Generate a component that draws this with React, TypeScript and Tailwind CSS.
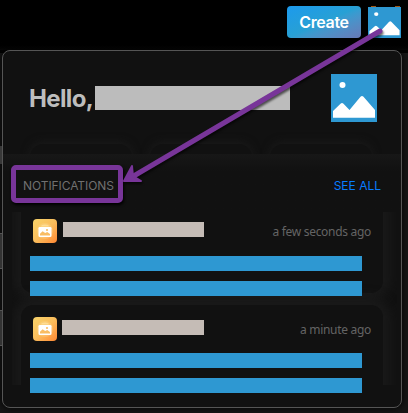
import React from "react";

function Mountains({ className }: { className: string }) {
  return (
    <svg className={className} viewBox="0 0 46 48" preserveAspectRatio="none" aria-hidden="true">
      <rect width="46" height="48" fill="#2e98d2" />
      <circle cx="11.5" cy="11" r="3" fill="#fff" />
      <path d="M2 43.7V37L9.5 29.7Q11 28.3 12.5 29.7L18.5 36L29.5 22.7Q31 21.2 32.5 22.7L44 36V43.7Z" fill="#fff" />
    </svg>
  );
}

function PhotoBadge() {
  return (
    <div className="h-6 w-6 shrink-0 rounded-[4px] bg-linear-to-br from-[#f7d36a] via-[#fabd5c] to-[#ff8732]">
      <svg viewBox="0 0 24 24" className="block h-6 w-6" aria-hidden="true">
        <circle cx="12" cy="12" r="8" fill="#ffe2a8" opacity=".25" />
        <path d="M8 7.5Q8 5.5 12 5.5T16 7.5Z" fill="#ffe19b" opacity=".8" />
        <rect x="5.5" y="8" width="13" height="10" rx="1.3" fill="#fff" />
        <path d="M7 16.5V14.8L9.6 12.2L12.2 14L14.2 13L17 15V16.5Z" fill="#f9bd63" />
        <circle cx="14" cy="11" r="1.1" fill="#f9bd63" />
      </svg>
    </div>
  );
}

function Notice({ time, second = false }: { time: string; second?: boolean }) {
  return (
    <article className={second ? "h-[80px] pt-3" : "h-[81px] pt-[7px]"}>
      <div className="flex h-6 items-center pr-3 pl-3">
        <PhotoBadge />
        <div className={second ? "-mt-[3px] ml-[5px] h-[15px] w-[142px] bg-[#c5bcb6]" : "-mt-[3px] ml-[6px] h-[15px] w-[141px] bg-[#c5bcb6]"} />
        <time className="mt-[2px] ml-auto font-['Noto_Sans','Open_Sans',sans-serif] text-[12px] leading-4 tracking-[-0.3px] whitespace-nowrap text-[#646464]">{time}</time>
      </div>
      <div className={second ? "mt-3 ml-[9px] h-[15px] w-[332px] bg-[#2e98d2]" : "mt-[13px] ml-[9px] h-[15px] w-[332px] bg-[#2e98d2]"} />
      <div className="mt-[10px] ml-[9px] h-[15px] w-[332px] bg-[#2e98d2]" />
    </article>
  );
}

export default function App() {
  return (
    <div className="relative h-[413px] w-[408px] overflow-hidden bg-[linear-gradient(#000_0_53px,#161616_53px)] font-['Inter',sans-serif]">
      <header className="flex h-[50px] justify-end bg-linear-to-b from-black from-80% to-[#080808] pt-[6px] pr-[7px]">
        <button className="h-8 w-[74px] rounded-[4px] bg-linear-to-br from-[#1c9aed] via-[#28a0d4] to-[#6679b6] text-[16px] leading-8 font-semibold tracking-[-0.35px] text-white">Create</button>
        <div className="relative mt-px ml-[7px] h-[31px] w-[33px]">
          <Mountains className="block h-[31px] w-[33px]" />
          <span className="absolute -top-px left-[3px] h-px w-[5px] bg-[#a35714]" />
          <span className="absolute -top-px right-[1px] h-px w-[5px] bg-[#a35714]" />
        </div>
      </header>

      <main className="relative ml-[2px] h-[358px] w-[400px] rounded-[8px] border border-[#555] bg-[#111] shadow-[0_0_7px_#000]">
        <section className="relative flex h-[103px] overflow-hidden pt-[23px] pl-[26px]">
          <h1 className="mt-[9px] w-[66px] text-[24px] leading-8 font-bold tracking-[-0.65px] whitespace-nowrap text-[#bdbdbd]">Hello,</h1>
          <div className="mt-3 h-6 w-[195px] bg-[#bcbcbc]" />
          <Mountains className="ml-[41px] block h-12 w-[46px]" />
          <div className="absolute top-[93px] left-[27px] flex h-4 gap-[18px]">
            <i className="h-9 w-[102px] rounded-[13px] bg-[#111] shadow-[0_-2px_9px_#1a1a1a]" />
            <i className="h-9 w-[102px] rounded-[13px] bg-[#111] shadow-[0_-2px_9px_#1a1a1a]" />
            <i className="h-9 w-[102px] rounded-[13px] bg-[#111] shadow-[0_-2px_9px_#1a1a1a]" />
          </div>
        </section>
        <section className="flex h-[58px] justify-between bg-linear-to-b from-[#171717] to-[#111] to-30% pt-[11px] pr-[20px] pl-2">
          <div className="h-[38px] w-[112px] rounded-[5px] border-[5px] border-[#783599] pl-[7px] text-[12px] leading-[31px] tracking-[-0.07px] whitespace-nowrap text-[#707070] shadow-[1px_2px_3px_#000]">NOTIFICATIONS</div>
          <a className="mt-[12px] text-[12px] leading-[18px] whitespace-nowrap text-[#087cff]">SEE ALL</a>
        </section>
        <section className="relative h-[173px] px-[18px]">
          <div className="absolute inset-y-0 right-1 left-[9px] overflow-hidden">
            <div className="-mt-4 ml-[9px] h-[97px] w-[362px] rounded-[12px] bg-[#111] shadow-[0_0_12px_7px_#1a1a1a]" />
            <div className="mt-3 ml-[9px] h-[97px] w-[362px] rounded-[12px] bg-[#111] shadow-[0_0_12px_7px_#1a1a1a]" />
          </div>
          <div className="relative flex flex-col gap-3">
            <Notice time="a few seconds ago" />
            <Notice time="a minute ago" second />
          </div>
        </section>
      </main>

      <div className="absolute top-[146px] left-0 h-[18px] w-[2px] bg-[#383838]" />
      <div className="absolute top-[233px] left-0 h-[36px] w-[2px] border-y border-[#555] bg-[#333]" />
      <div className="absolute top-[310px] left-0 h-[36px] w-[2px] border-y border-[#555] bg-[#333]" />
      <svg className="pointer-events-none absolute inset-0 h-[413px] w-[408px] drop-shadow-[1px_2px_1px_#0009]" viewBox="0 0 408 413" aria-hidden="true">
        <path d="M380 31L132 177" stroke="#783599" strokeWidth="5" strokeLinecap="round" />
        <path d="M132 166L124 181L141 181L133 176Z" fill="#783599" stroke="#783599" strokeWidth="2" strokeLinejoin="round" />
      </svg>
    </div>
  );
}
